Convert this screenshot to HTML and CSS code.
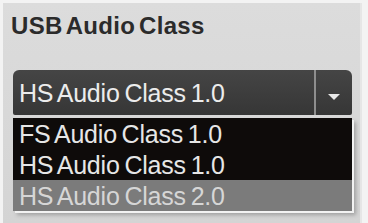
FILE: index.html
```html
<!DOCTYPE html>
<html lang="en">
<head>
    <meta charset="UTF-8">
    <title>USB Audio Class</title>
    <link rel="stylesheet" href="styles.css">
</head>
<body>
    <div class="panel">
        <div class="panel-title">USB Audio Class</div>

        <div class="dropdown">
            <div class="dropdown-current">
                <span class="dropdown-label">HS Audio Class 1.0</span>
                <span class="dropdown-arrow"></span>
            </div>
            <ul class="dropdown-list">
                <li>FS Audio Class 1.0</li>
                <li>HS Audio Class 1.0</li>
                <li class="active">HS Audio Class 2.0</li>
            </ul>
        </div>
    </div>
</body>
</html>
```

FILE: styles.css
```css
/* General Styling */
body {
    margin: 0;
    background: #f3f3f3;
    font-family: 'Liberation Sans', Arial, sans-serif;
    overflow: hidden;
}

/* Panel */
.panel {
    margin: 3px 6px 0 3px;
    height: 220px;
    padding: 9px 0 0 8px;
    box-sizing: border-box;
    background: linear-gradient(180deg, #dcdcdc, #d4d4d4);
    border-right: 2px solid #e6e6e6;
}

.panel-title {
    font-size: 24px;
    line-height: 28px;
    font-weight: bold;
    color: #2b2b2b;
    letter-spacing: 0.3px;
    word-spacing: -3px;
}

/* Dropdown */
.dropdown {
    margin: 30px 0 0 2px;
    width: 339px;
}

.dropdown-current {
    display: flex;
    height: 45px;
    background: linear-gradient(180deg, #454545, #363636);
    border-radius: 6px 6px 2px 2px;
    color: #ececec;
}

.dropdown-label {
    flex: 1;
    padding-left: 6px;
    font-size: 25px;
    line-height: 46px;
    letter-spacing: -0.2px;
    word-spacing: -2px;
}

.dropdown-arrow {
    width: 36px;
    border-left: 2px solid #8e8e8e;
    display: flex;
    align-items: center;
    justify-content: center;
}

.dropdown-arrow::after {
    content: '';
    margin-top: 8px;
    border-left: 6px solid transparent;
    border-right: 6px solid transparent;
    border-top: 6px solid #e8e8e8;
}

.dropdown-list {
    list-style: none;
    margin: 3px 0 0;
    padding: 0;
    background: #0e0b0a;
    box-shadow: 2px 2px 0 #f2f2f2, 4px 4px 4px rgba(0, 0, 0, 0.25);
}

.dropdown-list li {
    height: 31px;
    padding-left: 6px;
    font-size: 25px;
    line-height: 33px;
    letter-spacing: -0.2px;
    word-spacing: -2px;
    color: #e6e6e6;
}

.dropdown-list li.active {
    background: #7b7b7b;
    color: #d6d6d6;
}
```
